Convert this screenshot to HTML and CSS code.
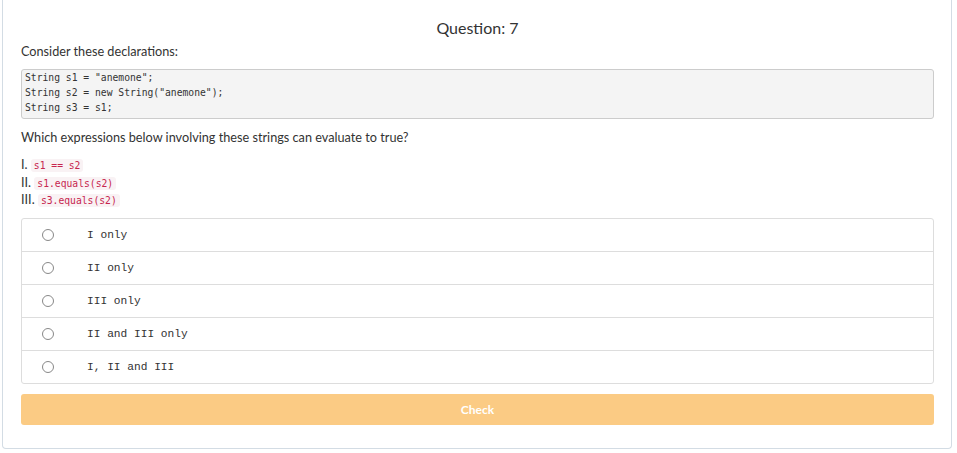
FILE: index.html
```html
<!DOCTYPE html>
<html>
<head>
<meta charset="utf-8">
<link rel="stylesheet" href="styles.css">
</head>
<body>
<div class="card">
  <h1 class="title">Question: 7</h1>
  <p class="text">Consider these declarations:</p>
  <pre class="code">String s1 = "anemone";
String s2 = new String("anemone");
String s3 = s1;</pre>
  <p class="text q">Which expressions below involving these strings can evaluate to true?</p>
  <div class="items">
    <div class="item">I. <code>s1 == s2</code></div>
    <div class="item">II. <code>s1.equals(s2)</code></div>
    <div class="item">III. <code>s3.equals(s2)</code></div>
  </div>
  <div class="options">
    <label class="opt"><span class="radio"></span><span class="otext">I only</span></label>
    <label class="opt"><span class="radio"></span><span class="otext">II only</span></label>
    <label class="opt"><span class="radio"></span><span class="otext">III only</span></label>
    <label class="opt"><span class="radio"></span><span class="otext">II and III only</span></label>
    <label class="opt"><span class="radio"></span><span class="otext">I, II and III</span></label>
  </div>
  <button class="check">Check</button>
</div>
</body>
</html>
```
FILE: styles.css
```css
html, body { margin: 0; padding: 0; background: #fff; }
body { font-family: Lato, "Open Sans", sans-serif; color: #333; }
.card {
  margin-left: 2px;
  width: 950px;
  height: 449px;
  box-sizing: border-box;
  border: 1px solid #d3dce4;
  border-top: 0;
  border-radius: 0 0 4px 4px;
  padding: 0 17px 0 18px;
  display: flex;
  flex-direction: column;
}
.title {
  margin: 18px 0 0;
  font-size: 16px;
  font-weight: 400;
  text-align: center;
  line-height: 20px;
  color: #333;
}
.text { margin: 0; font-size: 12.7px; line-height: 16px; }
.card > .text:first-of-type { margin-top: 5px; }
.code {
  margin: 10px 0 0;
  height: 50px;
  box-sizing: border-box;
  padding: 0 3px;
  background: #f4f4f4;
  border: 1px solid #ccc;
  border-radius: 3px;
  font-family: "DejaVu Sans Mono", monospace;
  font-size: 9.7px;
  line-height: 15px;
  color: #333;
}
.q { margin-top: 10px; }
.items { margin-top: 11px; font-size: 12.7px; }
.item { line-height: 17.5px; height: 17.5px; }
.item code {
  font-family: "DejaVu Sans Mono", monospace;
  font-size: 9.7px;
  color: #c7254e;
  background: #f9f2f4;
  border-radius: 3px;
  padding: 1px 3px;
}
.options {
  margin-top: 9px;
  border: 1px solid #ddd;
  border-radius: 3px;
}
.opt {
  display: flex;
  align-items: center;
  height: 33px;
  border-top: 1px solid #ddd;
  box-sizing: border-box;
}
.opt:first-child { border-top: 0; height: 32px; }
.radio {
  width: 10px;
  height: 10px;
  border: 1px solid #888;
  border-radius: 50%;
  margin-left: 20px;
  flex: none;
}
.otext {
  margin-left: 33px;
  font-family: "Liberation Mono", monospace;
  font-size: 11.2px;
  color: #333;
}
.check {
  margin-top: 10px;
  height: 31px;
  border: 0;
  border-radius: 3px;
  background: #fbcb84;
  color: #fff;
  font-family: Lato, sans-serif;
  font-weight: 700;
  font-size: 12px;
  padding: 0;
}
```
